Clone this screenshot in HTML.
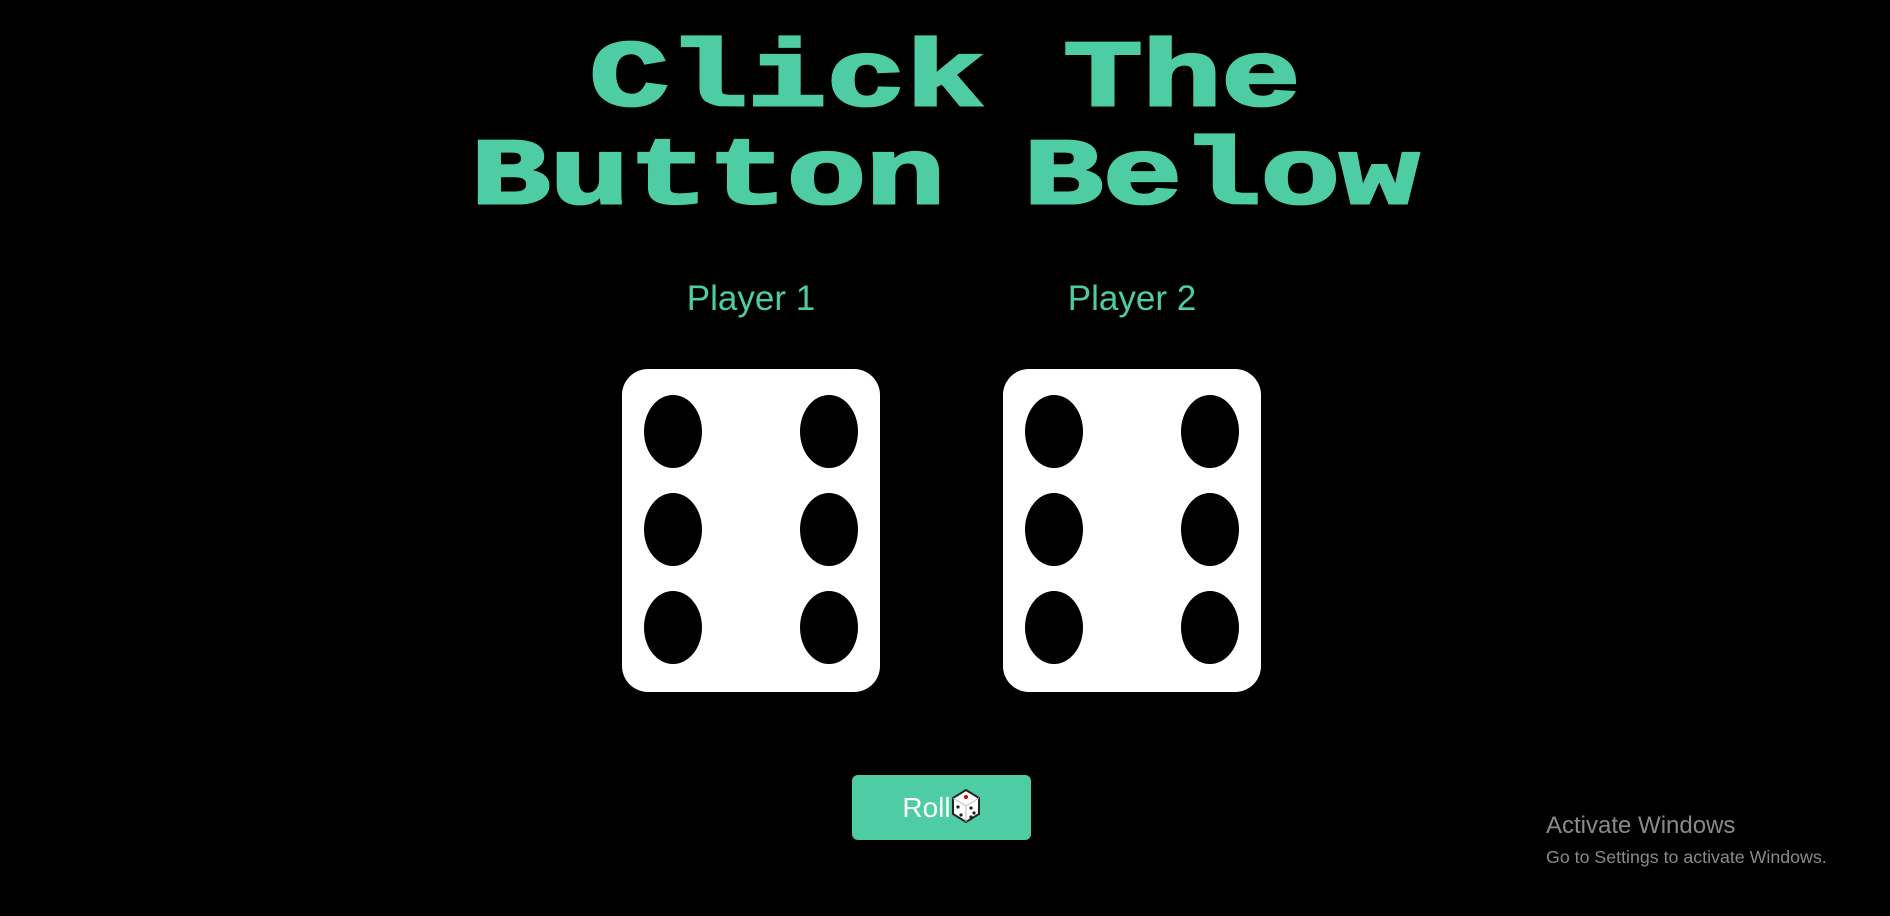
<!DOCTYPE html>
<html><head><meta charset="utf-8"><style>
html,body{margin:0;padding:0;background:#000;width:1890px;height:916px;overflow:hidden;position:relative}
.t{position:absolute;left:0;width:1890px;text-align:center;font-family:"Liberation Mono",monospace;font-weight:bold;font-size:94px;line-height:94px;color:#4ecca3;-webkit-text-stroke:3px #4ecca3;transform:scaleX(1.4);transform-origin:945px 0;white-space:pre}
.p{position:absolute;width:300px;text-align:center;font-family:"Liberation Sans",sans-serif;font-size:35px;line-height:36px;color:#4ecca3}
.d{position:absolute;top:369px;width:258px;height:323px;background:#fff;border-radius:26px}
.d i{position:absolute;width:58px;height:73px;background:#000;border-radius:50%}
.btn{position:absolute;left:852px;top:775px;width:179px;height:65px;background:#4ecca3;border-radius:6px;color:#fff;font-family:"Liberation Sans",sans-serif;font-size:28px;line-height:65px;text-align:center}
.aw{position:absolute;left:1546px;color:#8a8a8a;font-family:"Liberation Sans",sans-serif;white-space:nowrap}
</style></head><body>
<div class="t" style="top:34px">Click The</div>
<div class="t" style="top:132px">Button Below</div>
<div class="p" style="left:601px;top:281px">Player 1</div>
<div class="p" style="left:982px;top:281px">Player 2</div>
<div class="d" style="left:622px">
<i style="left:22px;top:26px"></i><i style="left:178px;top:26px"></i>
<i style="left:22px;top:124px"></i><i style="left:178px;top:124px"></i>
<i style="left:22px;top:222px"></i><i style="left:178px;top:222px"></i>
</div>
<div class="d" style="left:1003px">
<i style="left:22px;top:26px"></i><i style="left:178px;top:26px"></i>
<i style="left:22px;top:124px"></i><i style="left:178px;top:124px"></i>
<i style="left:22px;top:222px"></i><i style="left:178px;top:222px"></i>
</div>
<div class="btn">Roll<svg width="30" height="34" viewBox="0 0 30 34" style="vertical-align:-6px"><path d="M15 1 L28 9 L28 25 L15 33 L2 25 L2 9 Z" fill="#fff" stroke="#222" stroke-width="2"/><path d="M2 9 L15 17 L28 9 M15 17 L15 33" fill="none" stroke="#bbb" stroke-width="1"/><circle cx="15" cy="8" r="2" fill="#c00"/><circle cx="7" cy="18" r="1.6" fill="#222"/><circle cx="10" cy="26" r="1.6" fill="#222"/><circle cx="20" cy="19" r="1.6" fill="#222"/><circle cx="23" cy="24" r="1.6" fill="#222"/><circle cx="20" cy="28" r="1.6" fill="#222"/></svg></div>
<div class="aw" style="top:812px;font-size:24px">Activate Windows</div>
<div class="aw" style="top:847px;font-size:17.8px">Go to Settings to activate Windows.</div>
</body></html>
